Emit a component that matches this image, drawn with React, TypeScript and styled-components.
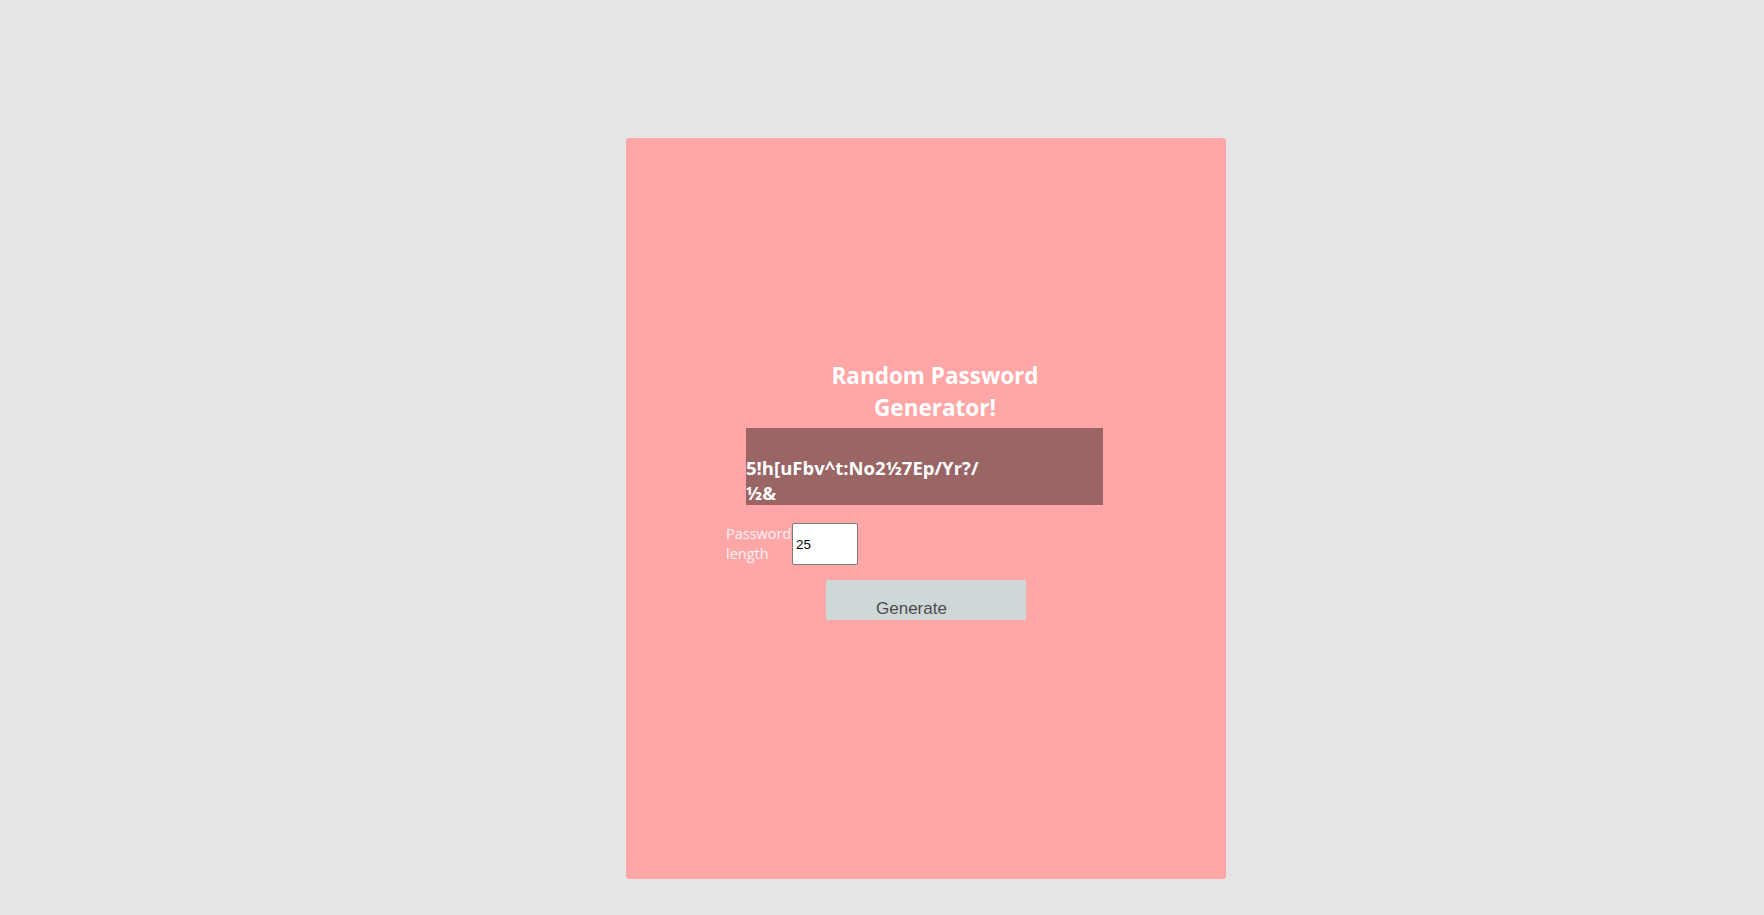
import React, { useState } from 'react';
import styled, { createGlobalStyle } from 'styled-components';

const GlobalStyle = createGlobalStyle`
    html, body {
        margin: 0;
        padding: 0;
        background: #e5e5e7;
        font-family: "Open Sans", "Noto Sans", sans-serif;
    }
`;

const Page = styled.div`
    min-height: 915px;
    display: flex;
    align-items: flex-start;
    padding: 138px 0 0 626px;
    box-sizing: border-box;
`;

const Card = styled.main`
    width: 600px;
    height: 741px;
    background: #ffa6a6;
    border-radius: 3px;
    display: flex;
    flex-direction: column;
    align-items: center;
    padding-top: 222px;
    box-sizing: border-box;

    .title {
        width: 290px;
        margin: 0 0 0 18px;
        text-align: center;
        color: #fff;
        font-size: 22.5px;
        font-weight: 700;
        line-height: 32px;
    }
`;

const Output = styled.div`
    width: 357px;
    height: 77px;
    margin: 4px 3px 0 0;
    background: #996565;
    box-sizing: border-box;
    padding-top: 27px;

    p {
        width: 240px;
        margin: 0;
        color: #fff;
        font-size: 18.5px;
        font-weight: 700;
        line-height: 25px;
        word-break: break-all;
    }
`;

const LengthRow = styled.div`
    align-self: flex-start;
    margin: 18px 0 0 100px;
    display: flex;
    align-items: center;

    label {
        width: 66px;
        color: #fff4f4;
        font-size: 14.5px;
        line-height: 20px;
    }

    input {
        width: 66px;
        height: 42px;
        box-sizing: border-box;
        margin: 0;
        padding: 0 3px;
        border: 1px solid #7a7a7a;
        border-radius: 2px;
        font-family: "Liberation Sans", Arial, sans-serif;
        font-size: 13.33px;
        color: #000;
        background: #fff;
    }
`;

const GenerateButton = styled.button`
    margin-top: 15px;
    width: 200px;
    height: 40px;
    border: none;
    border-radius: 2px;
    background: #cfd8d9;
    display: flex;
    align-items: flex-end;
    padding: 0 0 1px 50px;
    box-sizing: border-box;
    font-family: "Liberation Sans", Arial, sans-serif;
    font-size: 17px;
    color: #4b4b4b;
    cursor: pointer;
`;

const chars = 'abcdefghijklmnopqrstuvwxyzABCDEFGHIJKLMNOPQRSTUVWXYZ0123456789!@#$%^&*[]:/?½';

const App = () => {
    const [length, setLength] = useState<number>(25);
    const [password, setPassword] = useState<string>('5!h[uFbv^t:No2½7Ep/Yr?/½&');

    const handleGenerate = () => {
        let result = '';
        for (let i = 0; i < length; i++) {
            result += chars[Math.floor(Math.random() * chars.length)];
        }
        setPassword(result);
    };

    return (
        <>
            <GlobalStyle />
            <Page>
                <Card>
                    <h1 className="title">Random Password Generator!</h1>
                    <Output>
                        <p>{password}</p>
                    </Output>
                    <LengthRow>
                        <label htmlFor="pw-length">Password length</label>
                        <input
                            id="pw-length"
                            type="text"
                            value={length}
                            onChange={e => setLength(Number(e.target.value) || 0)}
                        />
                    </LengthRow>
                    <GenerateButton onClick={handleGenerate}>Generate</GenerateButton>
                </Card>
            </Page>
        </>
    );
};

export default App;
